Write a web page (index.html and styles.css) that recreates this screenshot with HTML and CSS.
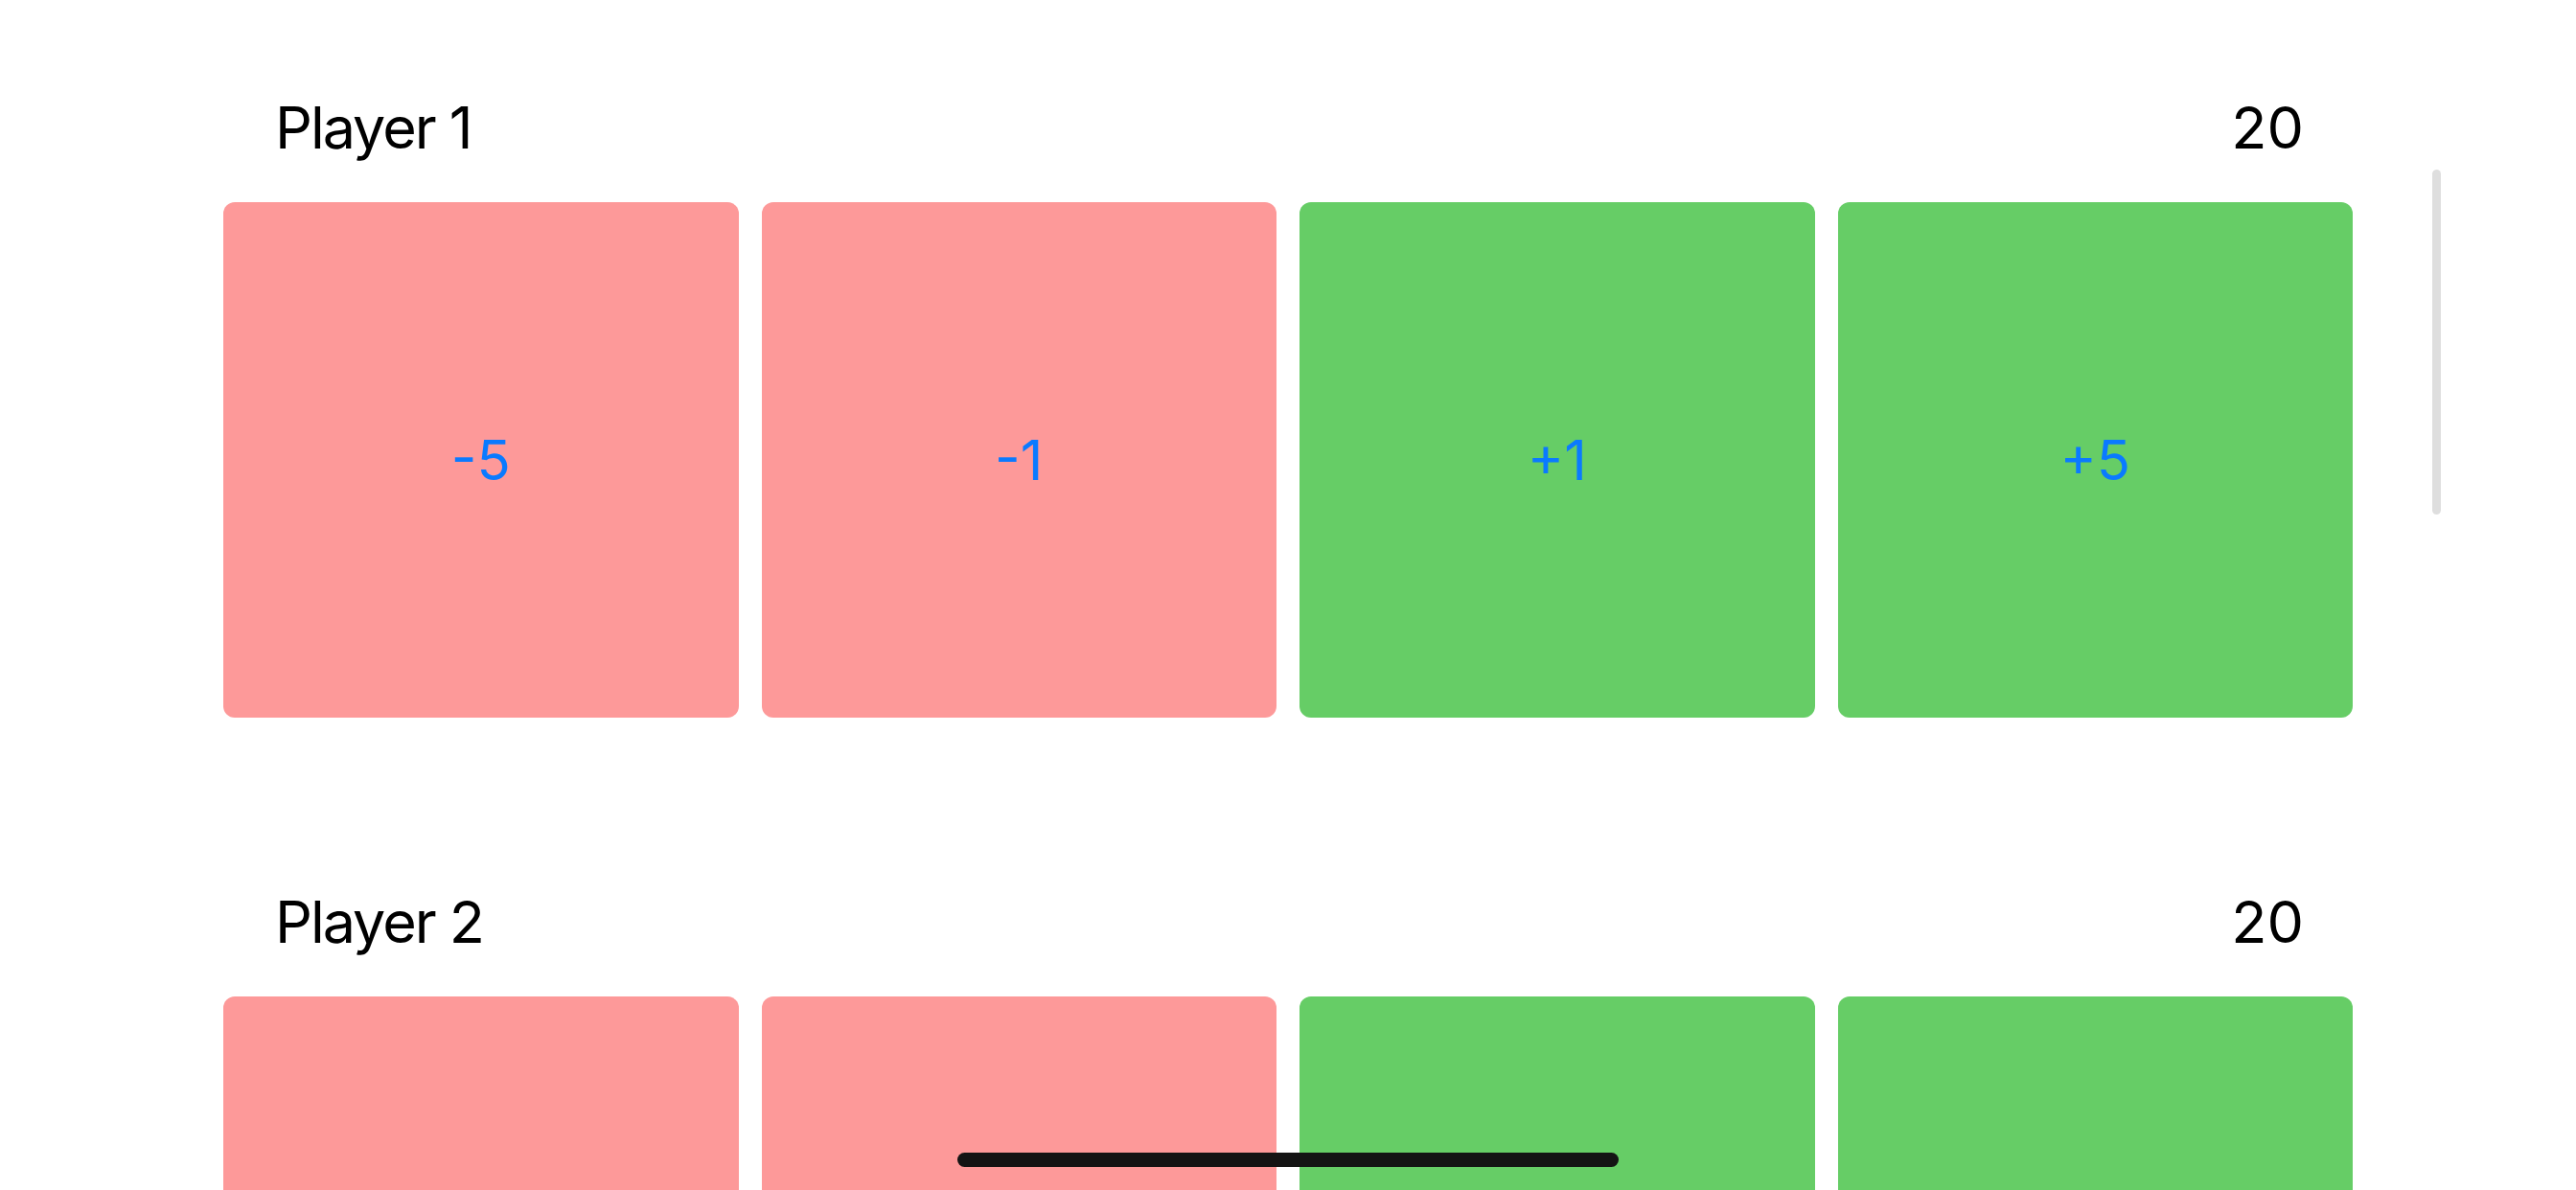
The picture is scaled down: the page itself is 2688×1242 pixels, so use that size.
FILE: index.html
```html
<!DOCTYPE html>
<html lang="en">
<head>
<meta charset="utf-8">
<title>Life Counter</title>
<link rel="stylesheet" href="styles.css">
</head>
<body>
<div class="screen">
  <div class="list">
    <section class="player">
      <div class="header"><span class="name">Player 1</span><span class="life">20</span></div>
      <div class="buttons">
        <button class="btn minus">-5</button>
        <button class="btn minus">-1</button>
        <button class="btn plus">+1</button>
        <button class="btn plus">+5</button>
      </div>
    </section>
    <section class="player">
      <div class="header"><span class="name">Player 2</span><span class="life">20</span></div>
      <div class="buttons">
        <button class="btn minus">-5</button>
        <button class="btn minus">-1</button>
        <button class="btn plus">+1</button>
        <button class="btn plus">+5</button>
      </div>
    </section>
  </div>
  <div class="scroll-indicator"></div>
  <div class="home-indicator"></div>
</div>
</body>
</html>
```

FILE: styles.css
```css
html, body {
  margin: 0;
  padding: 0;
  background: #ffffff;
}

.screen {
  position: relative;
  width: 2688px;
  height: 1242px;
  overflow: hidden;
  background: #ffffff;
  font-family: Inter, "Noto Sans", sans-serif;
}

.list {
  display: flex;
  flex-direction: column;
  gap: 177px;
  padding: 97px 233px 0 233px;
}

.header {
  display: flex;
  justify-content: space-between;
  align-items: baseline;
  height: 73px;
  line-height: 73px;
  padding: 0 51px 0 54px;
  margin-bottom: 41px;
  font-size: 61px;
  color: #000000;
}

.name {
  letter-spacing: -2px;
}

.life {
  letter-spacing: 0;
}

.buttons {
  display: grid;
  grid-template-columns: repeat(4, 1fr);
  gap: 24px;
}

.btn {
  aspect-ratio: 1 / 1;
  border: none;
  border-radius: 12px;
  margin: 0;
  padding: 0;
  display: flex;
  align-items: center;
  justify-content: center;
  font-family: Inter, "Noto Sans", sans-serif;
  font-size: 58px;
  color: #0a7aff;
}

.minus {
  background: #fd9999;
}

.plus {
  background: #66cd66;
}

.scroll-indicator {
  position: absolute;
  left: 2538px;
  top: 177px;
  width: 9px;
  height: 360px;
  border-radius: 5px;
  background: #dedede;
}

.home-indicator {
  position: absolute;
  left: 999px;
  top: 1203px;
  width: 690px;
  height: 15px;
  border-radius: 8px;
  background: #141414;
}
```
